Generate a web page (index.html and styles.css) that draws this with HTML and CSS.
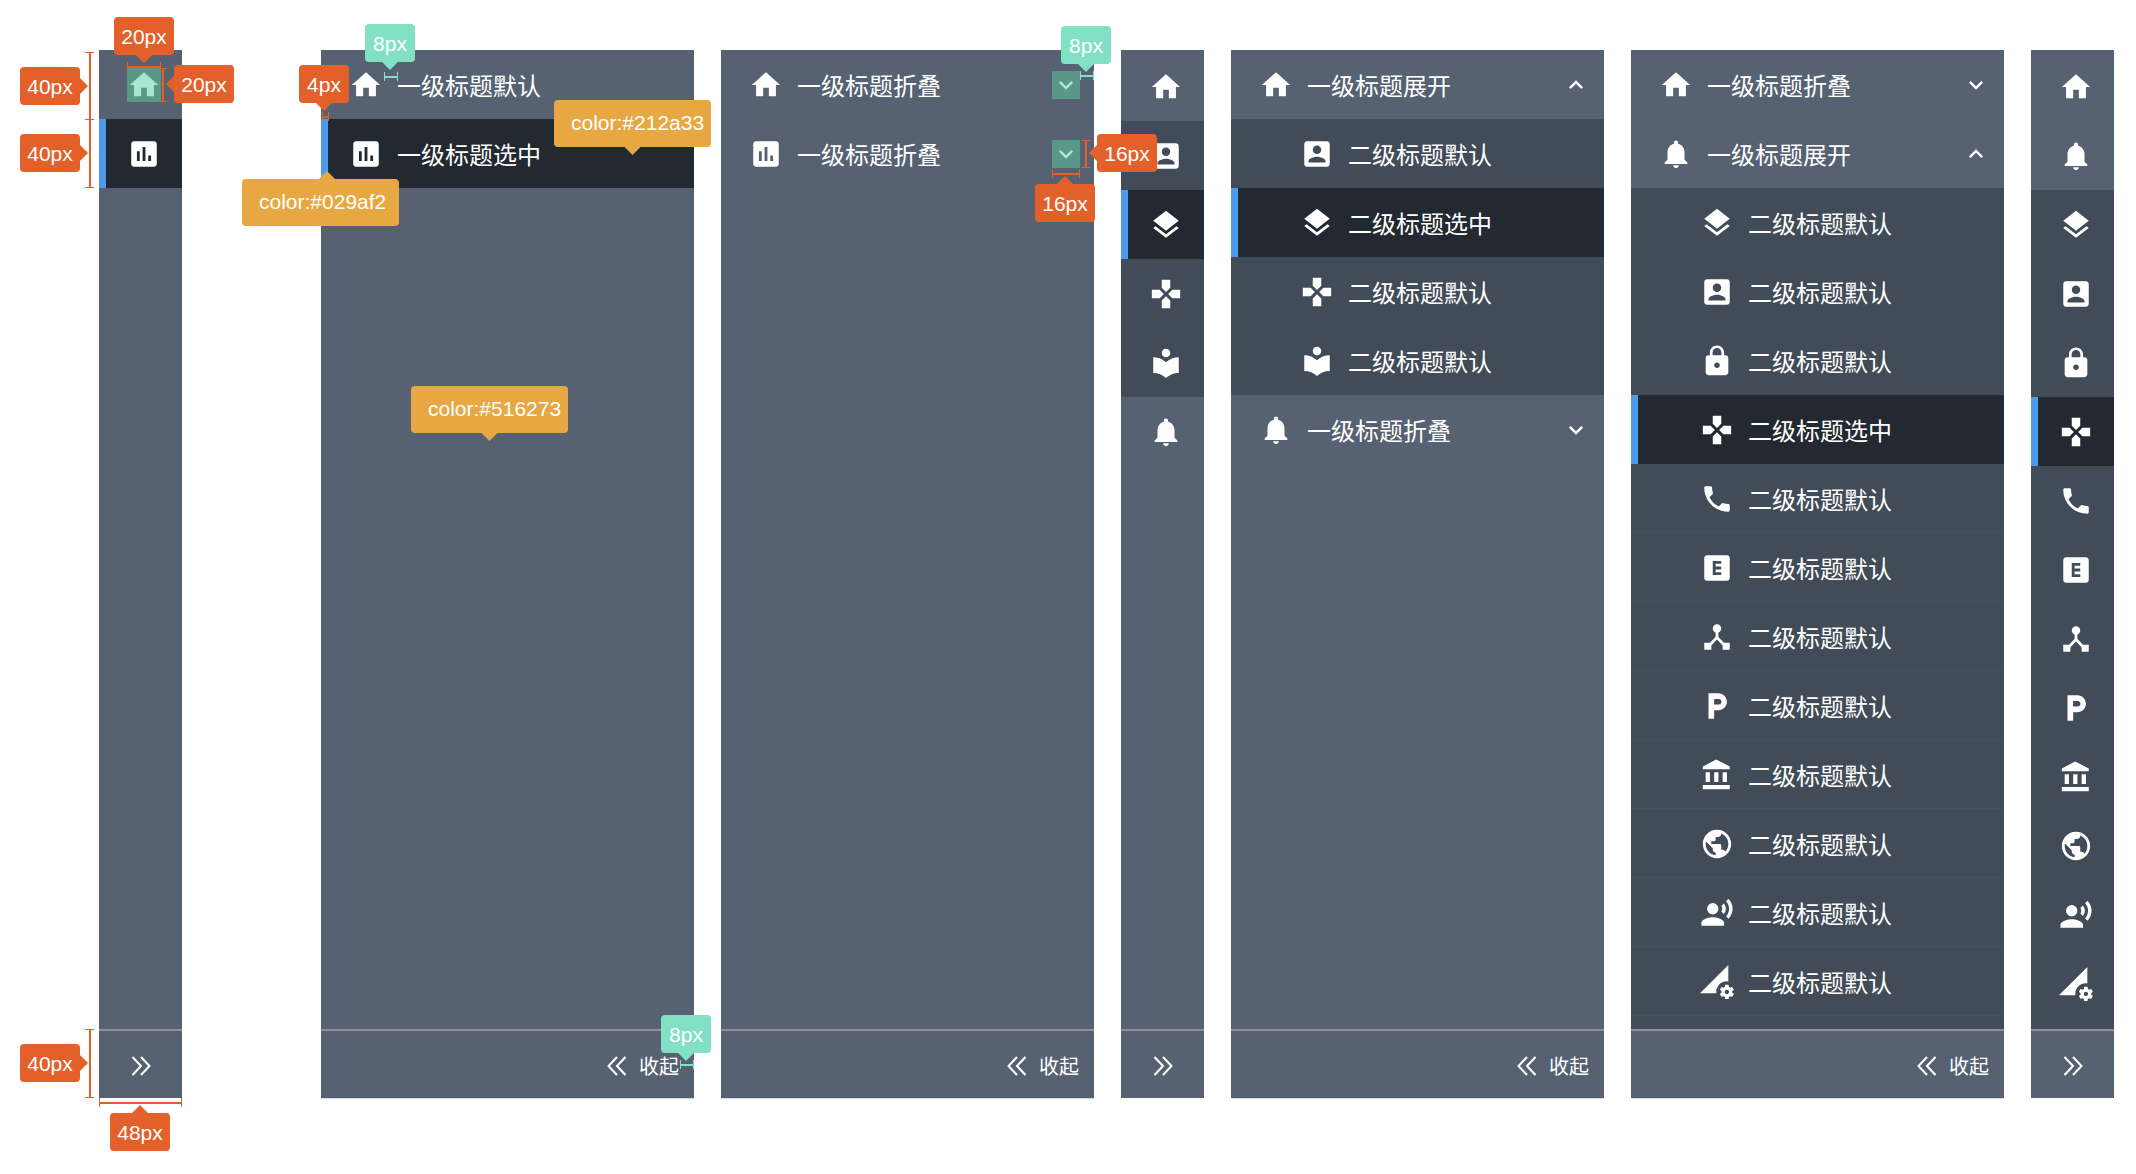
FILE: index.html
```html
<!DOCTYPE html>
<html lang="zh-CN">
<head>
<meta charset="utf-8">
<meta name="viewport" content="width=device-width, initial-scale=1">
<title>侧边导航规范</title>
<link rel="stylesheet" href="styles.css">
</head>
<body>
<svg class="sprite" aria-hidden="true">
  <symbol id="home" viewBox="0 0 24 24"><path d="M10 20v-6h4v6h5v-8h3L12 3 2 12h3v8z"/></symbol>
  <symbol id="chart" viewBox="0 0 24 24"><path d="M19 3H5c-1.1 0-2 .9-2 2v14c0 1.1.9 2 2 2h14c1.1 0 2-.9 2-2V5c0-1.1-.9-2-2-2zM9 17H7v-7h2v7zm4 0h-2V7h2v10zm4 0h-2v-4h2v4z"/></symbol>
  <symbol id="account" viewBox="0 0 24 24"><path d="M3 5v14c0 1.1.89 2 2 2h14c1.1 0 2-.9 2-2V5c0-1.1-.9-2-2-2H5c-1.11 0-2 .9-2 2zm12 4c0 1.66-1.34 3-3 3s-3-1.34-3-3 1.34-3 3-3 3 1.34 3 3zm-9 8c0-2 4-3.1 6-3.1s6 1.1 6 3.1v1H6v-1z"/></symbol>
  <symbol id="layers" viewBox="0 0 24 24"><path d="M11.99 18.54l-7.37-5.73L3 14.07l9 7 9-7-1.63-1.27-7.38 5.74zM12 16l7.36-5.73L21 9l-9-7-9 7 1.63 1.27L12 16z"/></symbol>
  <symbol id="gamepad" viewBox="0 0 24 24"><path d="M15 7.5V2H9v5.5l3 3 3-3zM7.5 9H2v6h5.5l3-3-3-3zM9 16.5V22h6v-5.5l-3-3-3 3zM16.5 9l-3 3 3 3H22V9h-5.5z"/></symbol>
  <symbol id="library" viewBox="0 0 24 24"><path d="M12 11.55C9.64 9.35 6.48 8 3 8v11c3.48 0 6.64 1.35 9 3.55 2.36-2.19 5.52-3.55 9-3.55V8c-3.48 0-6.64 1.35-9 3.55zM12 8c1.66 0 3-1.34 3-3s-1.34-3-3-3-3 1.34-3 3 1.34 3 3 3z"/></symbol>
  <symbol id="bell" viewBox="0 0 24 24"><path d="M12 22c1.1 0 2-.9 2-2h-4c0 1.1.89 2 2 2zm6-6v-5c0-3.07-1.64-5.64-4.5-6.32V4c0-.83-.67-1.5-1.5-1.5s-1.5.67-1.5 1.5v.68C7.63 5.36 6 7.92 6 11v5l-2 2v1h16v-1l-2-2z"/></symbol>
  <symbol id="lock" viewBox="0 0 24 24"><path d="M18 8h-1V6c0-2.76-2.24-5-5-5S7 3.24 7 6v2H6c-1.1 0-2 .9-2 2v10c0 1.1.9 2 2 2h12c1.1 0 2-.9 2-2V10c0-1.1-.9-2-2-2zm-6 9c-1.1 0-2-.9-2-2s.9-2 2-2 2 .9 2 2-.9 2-2 2zm3.1-9H8.9V6c0-1.71 1.39-3.1 3.1-3.1 1.71 0 3.1 1.39 3.1 3.1v2z"/></symbol>
  <symbol id="phone" viewBox="0 0 24 24"><path d="M6.62 10.79c1.44 2.83 3.76 5.14 6.59 6.59l2.2-2.2c.27-.27.67-.36 1.02-.24 1.12.37 2.33.57 3.57.57.55 0 1 .45 1 1V20c0 .55-.45 1-1 1-9.39 0-17-7.61-17-17 0-.55.45-1 1-1h3.5c.55 0 1 .45 1 1 0 1.25.2 2.45.57 3.57.11.35.03.74-.25 1.02l-2.2 2.2z"/></symbol>
  <symbol id="explicit" viewBox="0 0 24 24"><path d="M19 3H5c-1.1 0-2 .9-2 2v14c0 1.1.9 2 2 2h14c1.1 0 2-.9 2-2V5c0-1.1-.9-2-2-2zm-4 6h-4v2h4v2h-4v2h4v2H9V7h6v2z"/></symbol>
  <symbol id="hub" viewBox="0 0 24 24"><path d="M17 16l-4-4V8.82C14.16 8.4 15 7.3 15 6c0-1.66-1.34-3-3-3S9 4.34 9 6c0 1.3.84 2.4 2 2.82V12l-4 4H3v5h5v-3.05l4-4.2 4 4.2V21h5v-5h-4z"/></symbol>
  <symbol id="parking" viewBox="0 0 24 24"><path d="M13 3H6v18h4v-6h3c3.31 0 6-2.69 6-6s-2.69-6-6-6zm.2 8H10V7h3.2c1.1 0 2 .9 2 2s-.9 2-2 2z"/></symbol>
  <symbol id="bank" viewBox="0 0 24 24"><path d="M4 10v7h3v-7H4zm6 0v7h3v-7h-3zM2 22h19v-3H2v3zm14-12v7h3v-7h-3zm-4.5-9L2 6v2h19V6l-9.5-5z"/></symbol>
  <symbol id="globe" viewBox="0 0 24 24"><path d="M12 2C6.48 2 2 6.48 2 12s4.48 10 10 10 10-4.48 10-10S17.52 2 12 2zm-1 17.93c-3.95-.49-7-3.85-7-7.93 0-.62.08-1.21.21-1.79L9 15v1c0 1.1.9 2 2 2v1.93zm6.9-2.54c-.26-.81-1-1.39-1.9-1.39h-1v-3c0-.55-.45-1-1-1H8v-2h2c.55 0 1-.45 1-1V7h2c1.1 0 2-.9 2-2v-.41c2.93 1.19 5 4.06 5 7.41 0 2.08-.8 3.97-2.1 5.39z"/></symbol>
  <symbol id="voice" viewBox="0 0 24 24"><circle cx="9" cy="9" r="4"/><path d="M9 15c-2.67 0-8 1.34-8 4v2h16v-2c0-2.66-5.33-4-8-4zm7.76-9.64l-1.68 1.69c.84 1.18.84 2.71 0 3.89l1.68 1.69c2.02-2.02 2.02-5.07 0-7.27zM20.07 2l-1.63 1.63c2.77 3.02 2.77 7.56 0 10.74L20.07 16c3.9-3.89 3.91-9.95 0-14z"/></symbol>
  <symbol id="signal" viewBox="0 0 24 24"><path d="M18.99 11.5c.34 0 .67.03 1 .07L20 0 0 20h11.56c-.04-.33-.07-.66-.07-1 0-4.14 3.36-7.5 7.5-7.5zm3.71 7.99c.02-.16.04-.32.04-.49 0-.17-.01-.33-.04-.49l1.06-.83c.09-.08.12-.21.06-.32l-1-1.73c-.06-.11-.19-.15-.31-.11l-1.24.5c-.26-.2-.54-.37-.85-.49l-.19-1.32c-.01-.12-.12-.21-.24-.21h-2c-.12 0-.23.09-.25.21l-.19 1.32c-.3.13-.59.29-.85.49l-1.24-.5c-.11-.04-.24 0-.31.11l-1 1.73c-.06.11-.04.24.06.32l1.06.83c-.02.16-.03.32-.03.49 0 .17.01.33.03.49l-1.06.83c-.09.08-.12.21-.06.32l1 1.73c.06.11.19.15.31.11l1.24-.5c.26.2.54.37.85.49l.19 1.32c.02.12.12.21.25.21h2c.12 0 .23-.09.25-.21l.19-1.32c.3-.13.59-.29.84-.49l1.25.5c.11.04.24 0 .31-.11l1-1.73c.06-.11.03-.24-.06-.32l-1.07-.83zm-3.71 1.01c-.83 0-1.5-.67-1.5-1.5s.67-1.5 1.5-1.5 1.5.67 1.5 1.5-.67 1.5-1.5 1.5z"/></symbol>
  <symbol id="down" viewBox="0 0 24 24"><path d="M16.59 8.59L12 13.17 7.41 8.59 6 10l6 6 6-6z"/></symbol>
  <symbol id="up" viewBox="0 0 24 24"><path d="M12 8l-6 6 1.41 1.41L12 10.83l4.59 4.58L18 14z"/></symbol>
  <symbol id="fold" viewBox="0 0 20 20"><path d="M10 1L1.500 10 10 19M18.500 1L10 10l8.500 9" fill="none" stroke="currentColor" stroke-width="2"/></symbol>
  <symbol id="unfold" viewBox="0 0 20 20"><path d="M1.500 1L10 10l-8.500 9M10 1l8.500 9L10 19" fill="none" stroke="currentColor" stroke-width="2"/></symbol>
</svg>

<main class="board">
  <section class="panel panel-slim panel-first">
    <nav class="list" aria-label="收起导航">
      <a class="row" href="#" aria-label="首页"><svg class="icon icon-marked"><use href="#home"/></svg></a>
      <a class="row row-active" href="#" aria-label="报表"><svg class="icon"><use href="#chart"/></svg></a>
    </nav>
    <button class="foot foot-slim" type="button" aria-label="展开"><svg class="fold"><use href="#unfold"/></svg></button>

    <span class="span-h size at-icon-w"></span><span class="tag size tip-down at-icon-w-tag">20px</span>
    <span class="span-v size at-icon-h"></span><span class="tag size tip-left at-icon-h-tag">20px</span>
    <span class="span-v size at-row-1"></span><span class="tag size tip-right at-row-1-tag">40px</span>
    <span class="span-v size at-row-2"></span><span class="tag size tip-right at-row-2-tag">40px</span>
    <span class="span-v size at-foot-h"></span><span class="tag size tip-right at-foot-h-tag">40px</span>
    <span class="span-h size at-slim-w"></span><span class="tag size tip-up at-slim-w-tag">48px</span>
  </section>

  <section class="panel panel-wide">
    <nav class="list" aria-label="一级导航">
      <a class="row" href="#"><svg class="icon"><use href="#home"/></svg>一级标题默认</a>
      <a class="row row-active" href="#"><svg class="icon"><use href="#chart"/></svg>一级标题选中</a>
    </nav>
    <button class="foot" type="button"><svg class="fold"><use href="#fold"/></svg>收起</button>

    <span class="span-h size at-bar"></span><span class="tag tag-short size tip-down at-bar-tag">4px</span>
    <span class="span-h space at-icon-gap"></span><span class="tag tag-short space tip-down at-icon-gap-tag">8px</span>
    <span class="tag tag-color color tip-down at-active-color">color:#212a33</span>
    <span class="tag tag-color color tip-up at-bar-color">color:#029af2</span>
    <span class="tag tag-color color tip-down at-panel-color">color:#516273</span>
    <span class="span-h space at-foot-gap"></span><span class="tag tag-short space tip-down at-foot-gap-tag">8px</span>
  </section>

  <section class="panel panel-wide">
    <nav class="list" aria-label="一级折叠导航">
      <button class="row" type="button"><svg class="icon"><use href="#home"/></svg>一级标题折叠<svg class="arrow arrow-marked"><use href="#down"/></svg></button>
      <button class="row" type="button"><svg class="icon"><use href="#chart"/></svg>一级标题折叠<svg class="arrow arrow-marked"><use href="#down"/></svg></button>
    </nav>
    <button class="foot" type="button"><svg class="fold"><use href="#fold"/></svg>收起</button>

    <span class="span-h space at-edge-gap"></span><span class="tag tag-short space tip-down at-edge-gap-tag">8px</span>
    <span class="span-v size at-arrow-h"></span><span class="tag size tip-left at-arrow-h-tag">16px</span>
    <span class="span-h size at-arrow-w"></span><span class="tag size tip-up at-arrow-w-tag">16px</span>
  </section>

  <section class="panel panel-slim">
    <nav class="list list-slim" aria-label="收起的二级导航">
      <a class="row" href="#" aria-label="首页"><svg class="icon"><use href="#home"/></svg></a>
      <a class="row row-sub" href="#" aria-label="账户"><svg class="icon"><use href="#account"/></svg></a>
      <a class="row row-sub row-active" href="#" aria-label="图层"><svg class="icon"><use href="#layers"/></svg></a>
      <a class="row row-sub" href="#" aria-label="控制"><svg class="icon"><use href="#gamepad"/></svg></a>
      <a class="row row-sub" href="#" aria-label="阅读"><svg class="icon"><use href="#library"/></svg></a>
      <a class="row" href="#" aria-label="通知"><svg class="icon"><use href="#bell"/></svg></a>
    </nav>
    <button class="foot foot-slim" type="button" aria-label="展开"><svg class="fold"><use href="#unfold"/></svg></button>
  </section>

  <section class="panel panel-wide">
    <nav class="list" aria-label="二级导航">
      <button class="row" type="button" aria-expanded="true"><svg class="icon"><use href="#home"/></svg>一级标题展开<svg class="arrow"><use href="#up"/></svg></button>
      <div class="group">
        <a class="row row-sub" href="#"><svg class="icon"><use href="#account"/></svg>二级标题默认</a>
        <a class="row row-sub row-active" href="#"><svg class="icon"><use href="#layers"/></svg>二级标题选中</a>
        <a class="row row-sub" href="#"><svg class="icon"><use href="#gamepad"/></svg>二级标题默认</a>
        <a class="row row-sub" href="#"><svg class="icon"><use href="#library"/></svg>二级标题默认</a>
      </div>
      <button class="row" type="button" aria-expanded="false"><svg class="icon"><use href="#bell"/></svg>一级标题折叠<svg class="arrow"><use href="#down"/></svg></button>
    </nav>
    <button class="foot" type="button"><svg class="fold"><use href="#fold"/></svg>收起</button>
  </section>

  <section class="panel panel-wide">
    <nav class="list list-long" aria-label="长二级导航">
      <button class="row" type="button" aria-expanded="false"><svg class="icon"><use href="#home"/></svg>一级标题折叠<svg class="arrow"><use href="#down"/></svg></button>
      <button class="row" type="button" aria-expanded="true"><svg class="icon"><use href="#bell"/></svg>一级标题展开<svg class="arrow"><use href="#up"/></svg></button>
      <div class="group">
        <a class="row row-sub" href="#"><svg class="icon"><use href="#layers"/></svg>二级标题默认</a>
        <a class="row row-sub" href="#"><svg class="icon"><use href="#account"/></svg>二级标题默认</a>
        <a class="row row-sub" href="#"><svg class="icon"><use href="#lock"/></svg>二级标题默认</a>
        <a class="row row-sub row-active" href="#"><svg class="icon"><use href="#gamepad"/></svg>二级标题选中</a>
        <a class="row row-sub row-lined" href="#"><svg class="icon"><use href="#phone"/></svg>二级标题默认</a>
        <a class="row row-sub row-lined" href="#"><svg class="icon"><use href="#explicit"/></svg>二级标题默认</a>
        <a class="row row-sub row-lined" href="#"><svg class="icon"><use href="#hub"/></svg>二级标题默认</a>
        <a class="row row-sub row-lined" href="#"><svg class="icon"><use href="#parking"/></svg>二级标题默认</a>
        <a class="row row-sub row-lined" href="#"><svg class="icon"><use href="#bank"/></svg>二级标题默认</a>
        <a class="row row-sub row-lined" href="#"><svg class="icon"><use href="#globe"/></svg>二级标题默认</a>
        <a class="row row-sub row-lined" href="#"><svg class="icon"><use href="#voice"/></svg>二级标题默认</a>
        <a class="row row-sub row-lined" href="#"><svg class="icon"><use href="#signal"/></svg>二级标题默认</a>
      </div>
    </nav>
    <button class="foot" type="button"><svg class="fold"><use href="#fold"/></svg>收起</button>
  </section>

  <section class="panel panel-slim">
    <nav class="list list-slim list-long" aria-label="收起的长二级导航">
      <a class="row" href="#" aria-label="首页"><svg class="icon"><use href="#home"/></svg></a>
      <a class="row" href="#" aria-label="通知"><svg class="icon"><use href="#bell"/></svg></a>
      <div class="group">
        <a class="row row-sub" href="#" aria-label="图层"><svg class="icon"><use href="#layers"/></svg></a>
        <a class="row row-sub" href="#" aria-label="账户"><svg class="icon"><use href="#account"/></svg></a>
        <a class="row row-sub" href="#" aria-label="安全"><svg class="icon"><use href="#lock"/></svg></a>
        <a class="row row-sub row-active" href="#" aria-label="控制"><svg class="icon"><use href="#gamepad"/></svg></a>
        <a class="row row-sub" href="#" aria-label="电话"><svg class="icon"><use href="#phone"/></svg></a>
        <a class="row row-sub" href="#" aria-label="标记"><svg class="icon"><use href="#explicit"/></svg></a>
        <a class="row row-sub" href="#" aria-label="节点"><svg class="icon"><use href="#hub"/></svg></a>
        <a class="row row-sub" href="#" aria-label="停车"><svg class="icon"><use href="#parking"/></svg></a>
        <a class="row row-sub" href="#" aria-label="银行"><svg class="icon"><use href="#bank"/></svg></a>
        <a class="row row-sub" href="#" aria-label="全球"><svg class="icon"><use href="#globe"/></svg></a>
        <a class="row row-sub" href="#" aria-label="语音"><svg class="icon"><use href="#voice"/></svg></a>
        <a class="row row-sub" href="#" aria-label="数据设置"><svg class="icon"><use href="#signal"/></svg></a>
      </div>
    </nav>
    <button class="foot foot-slim" type="button" aria-label="展开"><svg class="fold"><use href="#unfold"/></svg></button>
  </section>
</main>
</body>
</html>
```

FILE: styles.css
```css
:root {
  --panel: #566272;
  --sub: #414c58;
  --active: #222930;
  --bar: #4f9aed;
  --size: #e3602b;
  --space: #82e0c4;
  --color: #e7a843;
}

* { box-sizing: border-box; }

body {
  margin: 0;
  background: #fff;
  color: #fff;
  font-family: "Noto Sans CJK SC", sans-serif;
  font-weight: 400;
}

.sprite { position: absolute; width: 0; height: 0; }

svg { display: block; flex: none; fill: currentColor; }

.board {
  display: flex;
  gap: 27px;
  min-height: 100vh;
  padding: 50px 22px 76px 99px;
}

.panel {
  position: relative;
  display: flex;
  flex-direction: column;
  background: var(--panel);
}
.panel-slim { flex: 0 0 83px; }
.panel-wide { flex: 1 1 0; min-width: 300px; box-shadow: 0 1px 0 #d3d9e1; }
.panel-first { margin-right: 112px; }

.list { flex: 1; display: flex; flex-direction: column; }
.list-slim { padding-top: 2px; }
.list-long .group { flex: 1; background: var(--sub); }

.row {
  display: flex;
  align-items: center;
  gap: 14px;
  width: 100%;
  height: 69px;
  padding: 0 14px 0 28px;
  border: 0;
  background: none;
  color: inherit;
  font: inherit;
  font-size: 24px;
  line-height: 34px;
  text-align: left;
  text-decoration: none;
  white-space: nowrap;
}
.row-sub { background: var(--sub); }
.panel-wide .row-sub { padding-left: 69px; }
.row-lined { box-shadow: inset 0 -1px 0 #46525e; }
.row-active { background: linear-gradient(to right, var(--bar) 7px, var(--active) 7px); }

.icon { width: 34px; height: 34px; }
.icon-marked { background: #5a9787; color: #a7e9d0; }
.arrow { width: 28px; height: 28px; margin-left: auto; }
.arrow-marked { background: #5a9787; color: #a7e9d0; }

.foot {
  display: flex;
  align-items: center;
  justify-content: flex-end;
  gap: 12px;
  height: 69px;
  padding: 2px 15px 0;
  border: 0;
  border-top: 2px solid #8e9093;
  background: none;
  color: inherit;
  font: inherit;
  font-size: 20px;
  line-height: 30px;
}
.foot-slim { justify-content: center; }
.fold { width: 20px; height: 20px; }

/* Measurement notes */
.size { --tone: var(--size); }
.space { --tone: var(--space); }
.color { --tone: var(--color); }

.tag {
  position: absolute;
  z-index: 2;
  width: 60px;
  height: 38px;
  border-radius: 4px;
  background: var(--tone);
  font-family: "Liberation Sans", Arial, sans-serif;
  font-size: 21px;
  line-height: 40px;
  text-align: center;
}
.tag-short { width: 50px; }
.tag-color {
  --tip: 50%;
  width: 157px;
  height: 47px;
  padding-left: 17px;
  line-height: 46px;
  text-align: left;
}

.tag::after { content: ""; position: absolute; background: var(--tone); }
.tip-down::after,
.tip-up::after { left: var(--tip, 50%); width: 16px; height: 8px; margin-left: -8px; }
.tip-down::after { top: 100%; clip-path: polygon(0 0, 100% 0, 50% 100%); }
.tip-up::after { bottom: 100%; clip-path: polygon(50% 0, 100% 100%, 0 100%); }
.tip-left::after,
.tip-right::after { top: 50%; width: 8px; height: 16px; margin-top: -8px; }
.tip-left::after { right: 100%; clip-path: polygon(0 50%, 100% 0, 100% 100%); }
.tip-right::after { left: 100%; clip-path: polygon(0 0, 100% 50%, 0 100%); }

.span-h,
.span-v { position: absolute; z-index: 1; border: 0 solid var(--tone); }
.span-h {
  height: 9px;
  border-width: 0 1px;
  background: linear-gradient(var(--tone), var(--tone)) center / 100% 2px no-repeat;
}
.span-v {
  width: 9px;
  border-width: 1px 0;
  background: linear-gradient(var(--tone), var(--tone)) center / 2px 100% no-repeat;
}

.at-icon-w { left: 28px; top: 12px; width: 34px; }
.at-icon-w-tag { left: 15px; top: -33px; }
.at-icon-h { left: 59px; top: 18px; height: 34px; }
.at-icon-h-tag { left: 75px; top: 15px; }
.at-row-1 { left: -14px; top: 2px; height: 68px; }
.at-row-1-tag { left: -79px; top: 17px; }
.at-row-2 { left: -14px; top: 69px; height: 69px; }
.at-row-2-tag { left: -79px; top: 84px; }
.at-foot-h { left: -14px; bottom: 0; height: 69px; }
.at-foot-h-tag { left: -79px; bottom: 16px; }
.at-slim-w { left: 0; bottom: -9px; width: 83px; }
.at-slim-w-tag { left: 11px; bottom: -53px; }

.at-bar { left: 1px; top: 62px; width: 7px; }
.at-bar-tag { left: -22px; top: 15px; }
.at-icon-gap { left: 63px; top: 22px; width: 14px; }
.at-icon-gap-tag { left: 44px; top: -26px; }
.at-active-color { right: -17px; top: 50px; }
.at-bar-color { --tip: 85px; left: -79px; top: 129px; }
.at-panel-color { left: 90px; top: 336px; }
.at-foot-gap { right: 0; bottom: 29px; width: 14px; }
.at-foot-gap-tag { right: -17px; bottom: 45px; }

.at-edge-gap { right: 0; top: 21px; width: 14px; }
.at-edge-gap-tag { right: -17px; top: -24px; }
.at-arrow-h { right: 4px; top: 90px; height: 28px; }
.at-arrow-h-tag { right: -63px; top: 84px; }
.at-arrow-w { right: 14px; top: 119px; width: 28px; }
.at-arrow-w-tag { right: -1px; top: 134px; }
```
